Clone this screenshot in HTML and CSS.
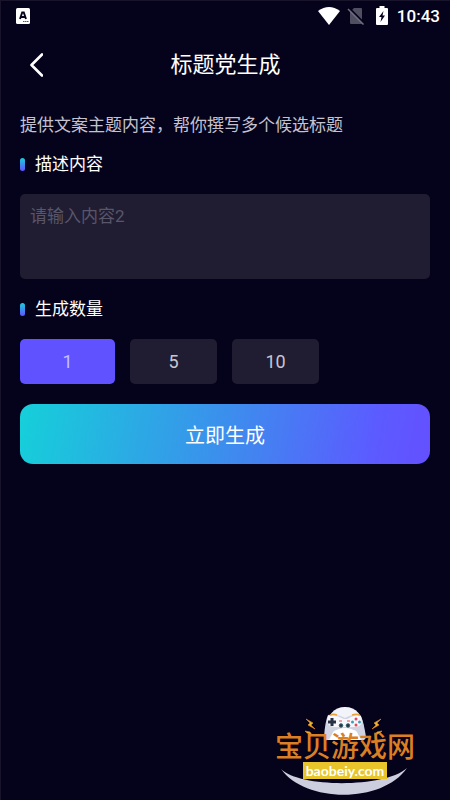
FILE: index.html
```html
<!DOCTYPE html>
<html lang="zh-CN">
<head>
<meta charset="utf-8">
<meta name="viewport" content="width=device-width, initial-scale=1">
<title>标题党生成</title>
<link rel="stylesheet" href="styles.css">
</head>
<body>
<div class="screen">
  <div class="status">
    <svg class="status-app" width="14" height="16" viewBox="0 0 14 16" aria-hidden="true">
      <rect width="14" height="16" rx="1.5" fill="#fff"/>
      <path d="M4 11 6.2 4.5h1.6L10 11M4.8 9h4.4" fill="none" stroke="#05021c" stroke-width="1.9"/>
      <path d="M7 13.5h6" stroke="#55536a" stroke-dasharray="1.5 .5"/>
    </svg>
    <svg class="status-wifi" width="22" height="18" viewBox="0 0 22 18" aria-hidden="true">
      <path d="M0 4Q11-4 22 4L11 18Z" fill="#fff"/>
    </svg>
    <svg class="status-sim" width="18" height="18" viewBox="0 0 18 18" aria-hidden="true">
      <path d="M7 1h7q1 0 1 1v14q0 1-1 1H4q-1 0-1-1V5Z" fill="#504e61"/>
      <path d="M1 0 17 16" stroke="#05021c" stroke-width="2"/>
      <path d="M1 2 16.500 17.500" stroke="#716f80" stroke-width="1.500"/>
    </svg>
    <svg class="status-battery" width="12" height="19" viewBox="0 0 12 19" aria-hidden="true">
      <path d="M3.500 0h5v2H11q1 0 1 1v15q0 1-1 1H1q-1 0-1-1V3q0-1 1-1h2.500Z" fill="#fff"/>
      <path d="M7.500 5 3 11h2.500L4.500 16 9 9.500H6.500Z" fill="#05021c"/>
    </svg>
    <time class="clock">10:43</time>
  </div>

  <header class="header">
    <button class="back" type="button" aria-label="返回">
      <svg width="14" height="24" viewBox="0 0 14 24" aria-hidden="true">
        <path d="M13 1.500 2.500 12 13 22.500" fill="none" stroke="#fff" stroke-width="2.600" stroke-linecap="round" stroke-linejoin="round"/>
      </svg>
    </button>
    <h1 class="title">标题党生成</h1>
  </header>

  <main class="main">
    <p class="intro">提供文案主题内容，帮你撰写多个候选标题</p>
    <label class="section" for="content">描述内容</label>
    <textarea class="content" id="content" placeholder="请输入内容2"></textarea>
    <h2 class="section" id="count">生成数量</h2>
    <div class="options" role="group" aria-labelledby="count">
      <button class="option option-active" type="button" aria-pressed="true">1</button>
      <button class="option" type="button" aria-pressed="false">5</button>
      <button class="option" type="button" aria-pressed="false">10</button>
    </div>
    <button class="submit" type="button">立即生成</button>
  </main>

  <div class="mark">
    <svg class="mark-art" width="150" height="105" viewBox="0 0 150 105" aria-hidden="true">
      <path d="M56 35Q58 12 75 12T94 35L93 45H57Z" fill="#f2f4fa"/>
      <path d="M58 20Q66 18 75 23 84 18 90 20 93 23 96 42 95 47 91 44L86 36Q75 31 64 36L59 44Q55 47 54 42 55 27 58 20Z" fill="#cfd3e2"/>
      <path d="M58 21Q66 19 74 24H77Q84 19 91 21 94 31 86 32H64Q55 31 58 21Z" fill="#f6f7fb"/>
      <path d="M63 37Q75 29 87 37L90 45H60Z" fill="#fff"/>
      <path d="M60 20.500Q63 18.500 67 20M82 20Q87 18.500 90 20.500" fill="none" stroke="#e9a13c" stroke-width="1.500"/>
      <path d="M62 23v8M58 27h8" stroke="#273044" stroke-width="3"/>
      <g fill="#e04a62"><circle cx="86" cy="24" r="1.500"/><circle cx="86" cy="30" r="1.500"/></g>
      <g fill="#3e9fb2"><circle cx="82.500" cy="27" r="1.500"/><circle cx="89.500" cy="27" r="1.500"/></g>
      <path d="M69 26h3M77 26h3" stroke="#e04a62" stroke-width="1.200"/>
      <g fill="#273044" stroke="#3d6673"><circle cx="71" cy="30.500" r="1.800"/><circle cx="78" cy="30.500" r="1.800"/></g>
      <path d="M36 24 43 28 41 30 45 34 38 30 40 28ZM111 24 104 28 106 30 102 34 109 30 107 28ZM35 36 40 37 42 40 37 38ZM112 36 107 37 105 40 110 38Z" fill="#e9b52c" stroke="#d98324" stroke-width=".7"/>
      <path d="M11 74C30 93 115 93 137 73C112 109 35 108 11 74Z" fill="#cccddd"/>
    </svg>
    <div class="mark-text">
      <span class="mark-name">宝贝游戏网</span>
      <span class="mark-url">baobeiy.com</span>
    </div>
  </div>
</div>
</body>
</html>
```
FILE: styles.css
```css
* {
  box-sizing: border-box;
}

body {
  margin: 0;
  background: #05021c;
  color: #fff;
  font-family: Roboto, "Noto Sans CJK SC", sans-serif;
}

button,
textarea {
  border: 0;
  font: inherit;
}

.screen {
  position: relative;
  min-height: 100vh;
  border-top: 1px solid #17142b;
  border-left: 1px solid #17142b;
}

.status {
  display: flex;
  align-items: center;
  height: 29px;
  padding: 0 10px 0 15px;
}

.status-wifi {
  margin-left: auto;
}

.status-sim {
  margin-left: 7px;
}

.status-battery {
  margin-left: 11px;
}

.clock {
  margin-left: 9px;
  font-size: 17px;
  font-weight: 500;
  line-height: 24px;
}

.header {
  display: grid;
  grid-template-columns: 60px 1fr 60px;
  align-items: center;
  height: 70px;
}

.back {
  display: flex;
  align-items: center;
  height: 48px;
  padding: 0 0 0 28px;
  background: none;
}

.title {
  margin: 0;
  font-size: 22px;
  font-weight: 400;
  line-height: 34px;
  text-align: center;
}

.main {
  display: flex;
  flex-direction: column;
  padding: 12px 20px 0 19px;
}

.intro {
  margin: 0;
  color: #c4c2cf;
  font-size: 17px;
  line-height: 26px;
}

.section {
  display: flex;
  align-items: center;
  gap: 10px;
  margin: 13px 0 17px;
  font-size: 17px;
  font-weight: 400;
  line-height: 26px;
}

.section::before {
  content: "";
  width: 5px;
  height: 13px;
  border-radius: 3px;
  background: linear-gradient(#18cfdb, #6450ff);
}

.content {
  display: block;
  width: 100%;
  height: 85px;
  padding: 9px 10px;
  border-radius: 5px;
  background: #201d33;
  color: #fff;
  font-size: 17px;
  line-height: 26px;
  resize: none;
}

.content::placeholder {
  color: #585668;
}

.content + .section {
  margin-top: 17px;
}

.options {
  display: flex;
  gap: 15px;
}

.option {
  width: 87px;
  height: 45px;
  padding: 0;
  border-radius: 5px;
  background: #201d33;
  color: #c8c6d2;
  font-size: 18px;
}

.option-active {
  width: 95px;
  background: #6152ff;
  color: #c4bfff;
}

.submit {
  height: 60px;
  margin-top: 20px;
  border-radius: 13px;
  background: linear-gradient(100deg, #15d0d9, #3c8eed 50%, #5b5cff 85%, #6450ff);
  color: #fff;
  font-size: 20px;
}

.mark {
  position: absolute;
  right: 30px;
  bottom: 0;
  width: 150px;
  height: 105px;
}

.mark-art {
  display: block;
}

.mark-text {
  position: absolute;
  inset: 39px 0 0;
  display: flex;
  flex-direction: column;
  align-items: center;
}

.mark-name {
  color: #dc7f22;
  font-size: 28px;
  font-weight: 500;
  line-height: 28px;
  white-space: nowrap;
}

.mark-url {
  padding: 0 3px;
  background: #e8c52b;
  color: #fff;
  font-family: Lato, sans-serif;
  font-size: 14px;
  font-weight: 700;
  line-height: 17px;
}
```
